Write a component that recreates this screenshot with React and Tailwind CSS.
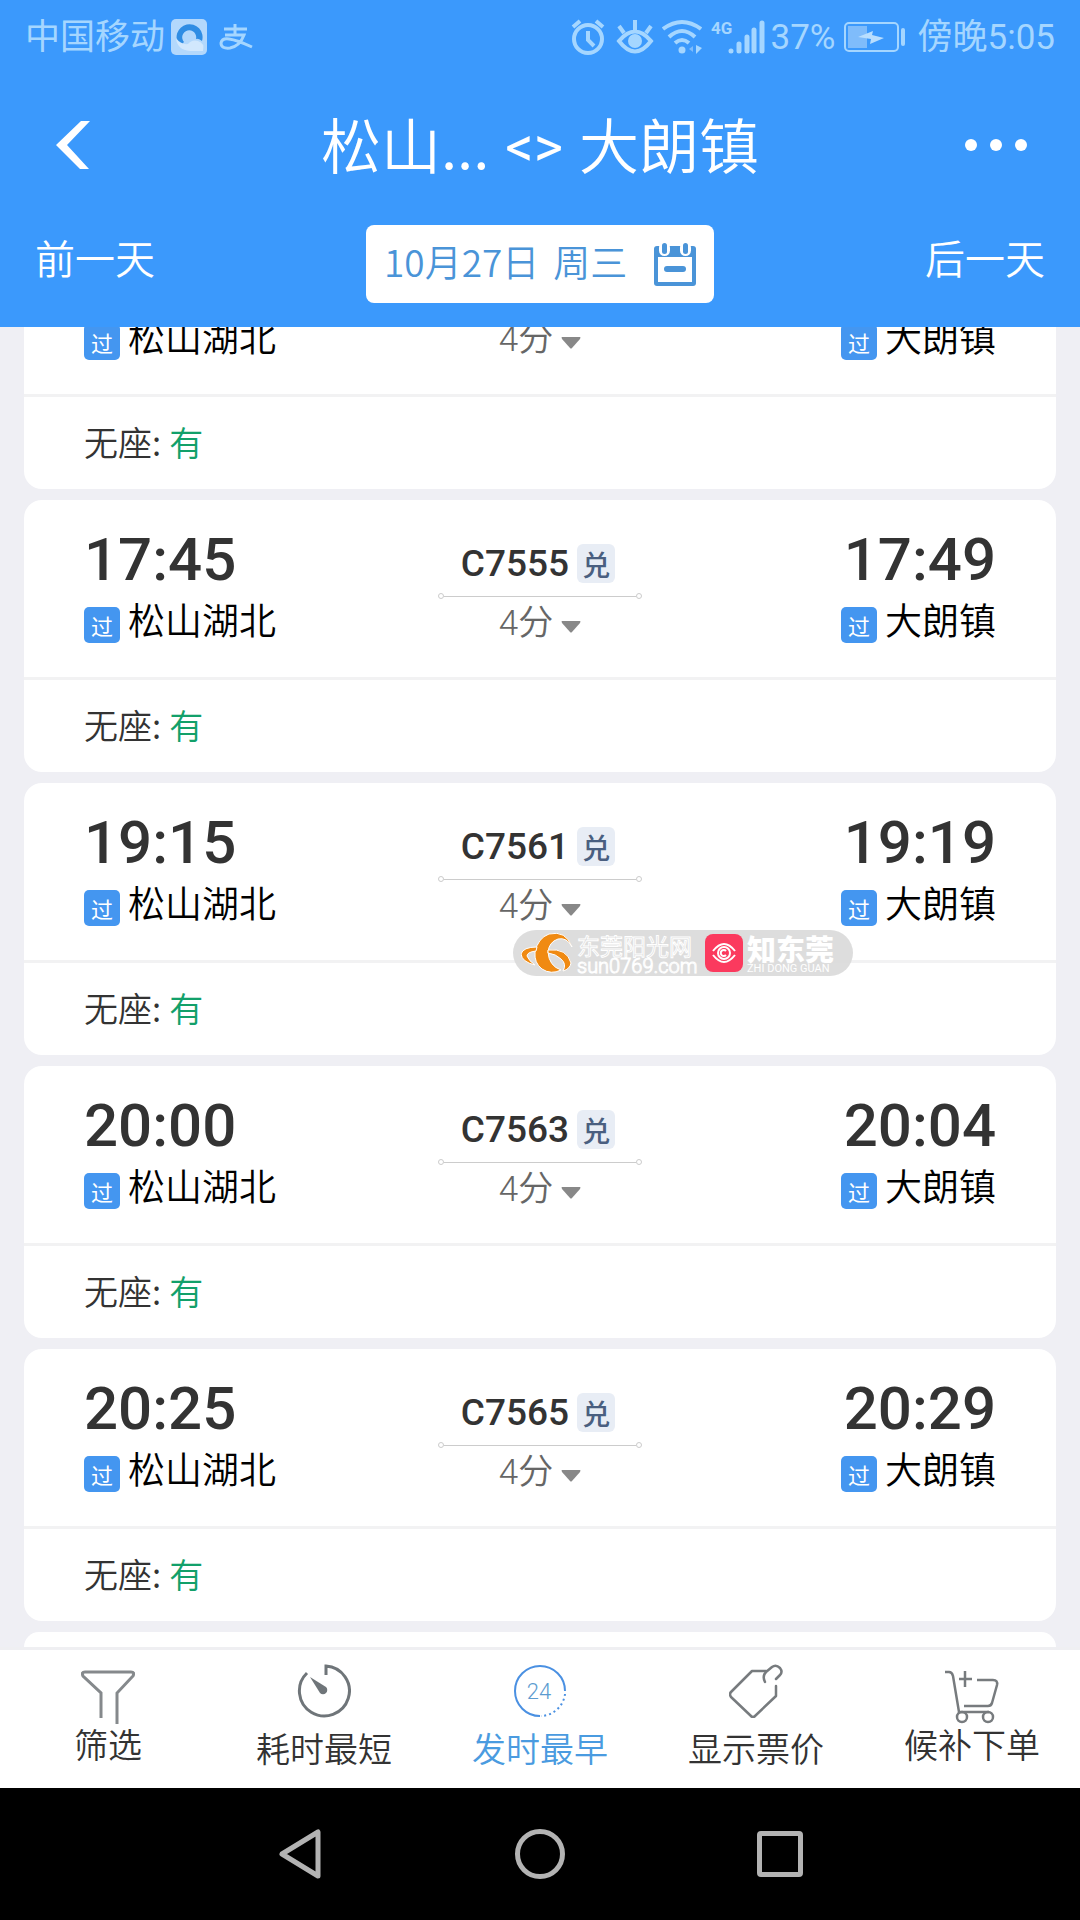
import React from 'react';

const trains = [
  { depart: '17:45', arrive: '17:49', code: 'C7555' },
  { depart: '19:15', arrive: '19:19', code: 'C7561' },
  { depart: '20:00', arrive: '20:04', code: 'C7563' },
  { depart: '20:25', arrive: '20:29', code: 'C7565' },
];

function StatusBar() {
  return (
    <div className="flex h-[72px] items-center justify-between px-[25px] pt-0.5 font-['Roboto','Noto_Sans_CJK_SC',sans-serif] text-[35px] leading-none text-[#a5d6ff]">
      <div className="flex items-center">
        <span>中国移动</span>
        <svg width="36" height="36" viewBox="0 0 36 36" className="ml-1.5">
          <rect width="36" height="36" rx="5" fill="#b3d8fc" />
          <path d="M9 27 A13 13 0 1 1 31 22 Q27 19 25 20 A7 7 0 1 0 13 23 Z" fill="#2f8de4" />
          <path d="M5 19 Q6 31 19 32 H32 Q34 24 27 22 Q21 20 17 25 Q10 26 5 19 Z" fill="#d2e8fd" />
        </svg>
        <svg width="34" height="27" viewBox="0 0 34 27" fill="none" stroke="#a5d6ff" strokeWidth="3" className="ml-3">
          <path d="M5 5 H28 M16 0 V11 M6 11 H25 Q21 22 11 24 Q2 25 2 19 Q3 14 10 15 Q18 16 33 23" />
        </svg>
      </div>
      <div className="flex items-center">
        <svg width="34" height="36" viewBox="0 0 34 36" fill="none" stroke="#a5d6ff" strokeWidth="4">
          <circle cx="17" cy="20" r="14" />
          <path d="M17 12 V21 L23 27 M2 8 L9 2 M32 8 L25 2" />
        </svg>
        <svg width="38" height="36" viewBox="0 0 38 36" fill="none" stroke="#a5d6ff" strokeWidth="4" className="ml-[11px]">
          <path d="M3 22 Q19 3 35 22 Q19 43 3 22 Z M19 11 V1 M8 14 L3 7 M30 14 L35 7" />
          <circle cx="19" cy="22" r="7" fill="#a5d6ff" stroke="none" />
        </svg>
        <svg width="40" height="36" viewBox="0 0 40 36" fill="none" stroke="#a5d6ff" strokeWidth="4" className="ml-2">
          <path d="M1 10 Q20 -4 39 10 M7 18 Q20 6 33 18 M13 24 Q20 18 27 24" />
          <circle cx="20" cy="31" r="3.5" fill="#a5d6ff" stroke="none" />
          <path d="M34 26 V35 L40 29 Z" fill="#a5d6ff" stroke="none" />
          <path d="M31 27 V33 L27 30 Z" fill="#7fbcfb" stroke="none" />
        </svg>
        <svg width="54" height="36" viewBox="0 0 54 36" className="ml-[9px]">
          <text x="0" y="15" fill="#a5d6ff" fontSize="17" fontWeight="700" fontFamily="Roboto, sans-serif">4G</text>
          <path d="M20 32 V32.1 M28 25 V32 M36 18 V32 M43 11 V32 M51 4 V32" stroke="#a5d6ff" strokeWidth="5" strokeLinecap="round" />
        </svg>
        <span className="ml-1.5">37%</span>
        <svg width="62" height="30" viewBox="0 0 62 30" className="ml-2">
          <rect x="1" y="1" width="53" height="28" rx="4" fill="none" stroke="#a5d6ff" strokeWidth="2" />
          <rect x="4" y="4" width="19" height="22" fill="#7fbcfb" />
          <path d="M14 15 L29 9 L28 13 L40 16 L26 22 L27 17 Z" fill="#b9defe" />
          <rect x="57" y="6" width="4" height="18" rx="2" fill="#a5d6ff" />
        </svg>
        <span className="ml-3">傍晚5:05</span>
      </div>
    </div>
  );
}

function Header() {
  return (
    <header className="relative z-10 h-[327px] bg-[#3b99fc] text-white">
      <StatusBar />
      <div className="flex h-[145px] items-center justify-between px-[53px]">
        <button aria-label="返回" className="w-[62px] pl-[3px]">
          <svg width="34" height="48" viewBox="0 0 34 48" fill="#fff">
            <path d="M25 0 H34 L11 24 L33 48 H24 L0 24 Z" />
          </svg>
        </button>
        <h1 className="flex items-center gap-4 pb-1 text-[60px] leading-none font-[350]">
          <span>松山...</span>
          <span className="pt-2 font-['Roboto',sans-serif] text-[56px] font-normal">&lt;&gt;</span>
          <span>大朗镇</span>
        </h1>
        <button aria-label="更多" className="flex w-[62px] justify-between">
          <span className="size-3 rounded-full bg-white" />
          <span className="size-3 rounded-full bg-white" />
          <span className="size-3 rounded-full bg-white" />
        </button>
      </div>
      <div className="flex items-center justify-between px-[35px] pt-2">
        <button className="pb-3.5 text-[40px] leading-none font-[350]">前一天</button>
        <button className="flex h-[78px] w-[348px] items-center justify-between rounded-lg bg-white px-[18px] text-[37px] leading-none font-[350] text-[#4a94d8]">
          <span className="flex gap-3.5 pb-1.5">
            <span>10月27日</span>
            <span>周三</span>
          </span>
          <CalendarIcon />
        </button>
        <button className="pb-3.5 text-[40px] leading-none font-[350]">后一天</button>
      </div>
    </header>
  );
}

function CalendarIcon() {
  return (
    <svg width="42" height="43" viewBox="0 0 42 43">
      <rect y="3" width="42" height="40" rx="3" fill="#4a94d8" />
      <rect x="4" y="14" width="34" height="25" fill="#fff" />
      <rect x="5" y="-1" width="11" height="14" rx="5.5" fill="#fff" />
      <rect x="26" y="-1" width="11" height="14" rx="5.5" fill="#fff" />
      <rect x="8" y="0" width="5" height="11" rx="2.5" fill="#4a94d8" />
      <rect x="29" y="0" width="5" height="11" rx="2.5" fill="#4a94d8" />
      <rect x="10" y="23" width="22" height="6" rx="3" fill="#4a94d8" />
    </svg>
  );
}

function Station({ name }) {
  return (
    <div className="flex items-start gap-2">
      <span className="mt-[9px] flex size-9 items-center justify-center rounded-[5px] bg-[#4496f0] text-[22px] leading-none text-white">过</span>
      <span className="text-[37px] leading-[42px] font-[350] text-black">{name}</span>
    </div>
  );
}

function Duration() {
  return (
    <button className="flex items-center gap-2 font-['Roboto','Noto_Sans_CJK_SC',sans-serif] text-[35px] leading-[42px] font-[350] text-[#666]">
      4分
      <svg width="20" height="12" viewBox="0 0 20 12" fill="#888" className="mt-1.5">
        <path d="M1 0 H19 Q20 0 19 2 L11 11 Q10 12 9 11 L1 2 Q0 0 1 0 Z" />
      </svg>
    </button>
  );
}

function Seats() {
  return (
    <div className="flex h-[95px] items-center gap-2 border-t-3 border-[#f2f2f3] px-[60px] pb-0.5 text-[34px] leading-none font-[350] text-[#333]">
      <span>无座:</span>
      <span className="text-[#12a06a]">有</span>
    </div>
  );
}

function TrainCard({ train }) {
  return (
    <article className="rounded-[18px] bg-white">
      <div className="grid h-[177px] grid-cols-[1fr_204px_1fr] px-[60px] pt-6">
        <div>
          <p className="mb-[3px] font-[Roboto] text-[60px] leading-[71px] font-medium text-[#333]">{train.depart}</p>
          <Station name="松山湖北" />
        </div>
        <div className="flex flex-col items-center pt-5">
          <div className="flex items-center gap-2 pr-1 text-[#333]">
            <span className="font-[Roboto] text-[37px] leading-[38px] font-medium">{train.code}</span>
            <span className="flex h-[39px] w-[38px] items-center justify-center rounded-md bg-[#e8edf5] text-[28px] leading-none font-medium text-[#4a5f80]">兑</span>
          </div>
          <div className="mt-2.5 mb-1 flex w-full items-center">
            <span className="size-[6px] rounded-full border border-[#ccc]" />
            <span className="h-px flex-1 bg-[#ccc]" />
            <span className="size-[6px] rounded-full border border-[#ccc]" />
          </div>
          <Duration />
        </div>
        <div className="flex flex-col items-end">
          <p className="mb-[3px] font-[Roboto] text-[60px] leading-[71px] font-medium text-[#333]">{train.arrive}</p>
          <Station name="大朗镇" />
        </div>
      </div>
      <Seats />
    </article>
  );
}

// Card that is already scrolled halfway under the header
function ScrolledCard() {
  return (
    <article className="rounded-b-[18px] bg-white">
      <div className="-mt-3 grid h-[79px] grid-cols-[1fr_204px_1fr] px-[60px]">
        <Station name="松山湖北" />
        <div className="flex items-start justify-center pt-1">
          <Duration />
        </div>
        <div className="flex justify-end">
          <Station name="大朗镇" />
        </div>
      </div>
      <Seats />
    </article>
  );
}

// Translucent source stamp that floats over the list
function Watermark() {
  return (
    <div className="absolute top-[603px] left-[513px] flex h-[46px] w-[340px] items-center rounded-full bg-[#d9d9d9]/90 pl-2">
      <svg width="52" height="40" viewBox="0 0 52 40" fill="#f08a12" stroke="#fff" strokeWidth="1">
        <path d="M51 14 Q46 4 37 6 Q28 9 27 19 Q28 33 40 37 Q30 42 21 36 Q13 30 14 19 Q17 5 28 1 Q45 -3 51 14 Z" />
        <path d="M15 18 Q6 19 6 23 Q8 28 14 32 Q1 29 0 21 Q2 14 16 14 Z" />
        <path d="M27 17 Q46 15 50 30 Q49 36 42 38 Q46 31 40 26 Q35 21 27 20 Z" />
      </svg>
      <div className="ml-1 flex w-[120px] flex-col text-[#d9d9d9] [-webkit-text-stroke:1px_#fff]">
        <span className="text-[23px] leading-[27px]">东莞阳光网</span>
        <span className="font-[Roboto] text-[20px] leading-[15px] font-light">sun0769.com</span>
      </div>
      <svg width="38" height="38" viewBox="0 0 38 38" fill="none" stroke="#fff" strokeWidth="2" className="ml-2">
        <rect width="38" height="38" rx="8" fill="#fb3a5e" stroke="none" />
        <path d="M8 17 Q19 3 30 17 M8 21 Q19 35 30 21" />
        <circle cx="19" cy="19" r="6" />
        <path d="M21 17 A3 3 0 1 0 21 21" />
      </svg>
      <div className="ml-1 flex flex-col text-white">
        <span className="text-[29px] leading-[32px] font-black">知东莞</span>
        <span className="font-[Roboto] text-[11px] leading-[10px]">ZHI DONG GUAN</span>
      </div>
    </div>
  );
}

function FunnelIcon() {
  return (
    <svg width="54" height="54" viewBox="0 0 54 54" fill="none" stroke="#85898c" strokeWidth="3">
      <path d="M20 48 V23 L2 6 Q0 2 4 2 H50 Q54 2 52 6 L36 23 V54" />
    </svg>
  );
}

function TimerIcon() {
  return (
    <svg width="54" height="54" viewBox="0 0 54 54" fill="none" stroke="#6f7579" strokeWidth="3">
      <path d="M29 11 V2 A25 25 0 1 1 10 9" />
      <path d="M13 13 L29 23 A4 4 0 1 1 23 29 Z" fill="#6f7579" stroke="none" />
    </svg>
  );
}

function Clock24Icon() {
  return (
    <svg width="54" height="54" viewBox="0 0 54 54" fill="none" stroke="#4a90e2" strokeWidth="2">
      <path d="M27 52 A25 25 0 1 1 52 27" />
      <path d="M52 30 A25 25 0 0 1 28 52" strokeDasharray="2 3" />
      <text x="26" y="35" textAnchor="middle" fontSize="22" fontWeight="300" fill="#5b9bd0" stroke="none" fontFamily="Roboto, sans-serif">24</text>
    </svg>
  );
}

function TagIcon() {
  return (
    <svg width="54" height="54" viewBox="0 0 54 54" fill="none" stroke="#777b7e" strokeWidth="2.5" strokeLinejoin="round" strokeLinecap="round">
      <path d="M37 7 H23 L2 28 Q0 30 2 33 L22 52 Q24 54 26 52 L47 32 V22" />
      <path d="M36 18 Q33 12 37 8 L43 3 Q47 0 51 4 Q54 8 51 11 L47 15" />
    </svg>
  );
}

function CartIcon() {
  return (
    <svg width="54" height="54" viewBox="0 0 54 54" fill="none" stroke="#777b7e" strokeWidth="2.5">
      <path d="M0 2 H4 Q7 2 8 6 L14 42 H44 M32 10 H48 Q53 10 52 15 L47 33 Q46 36 43 36 H19" />
      <path d="M20 1 V17 M14 9 H27" />
      <circle cx="17" cy="47" r="5" />
      <circle cx="43" cy="47" r="5" />
    </svg>
  );
}

const tabs = [
  { label: '筛选', Icon: FunnelIcon, className: 'pt-5 text-[#333]', labelClass: 'mt-0.5' },
  { label: '耗时最短', Icon: TimerIcon, className: 'pt-3.5 text-[#333]', labelClass: 'mt-3' },
  { label: '发时最早', Icon: Clock24Icon, className: 'pt-3.5 text-[#4a9be0]', labelClass: 'mt-3' },
  { label: '显示票价', Icon: TagIcon, className: 'pt-3.5 text-[#333]', labelClass: 'mt-3' },
  { label: '候补下单', Icon: CartIcon, className: 'pt-5 text-[#333]', labelClass: 'mt-0.5' },
];

function TabBar() {
  return (
    <nav className="relative z-10 grid h-[141px] grid-cols-5 border-t-3 border-[#efeff2] bg-white">
      {tabs.map(({ label, Icon, className, labelClass }) => (
        <button key={label} className={`flex flex-col items-center text-[34px] leading-[36px] font-[350] ${className}`}>
          <Icon />
          <span className={labelClass}>{label}</span>
        </button>
      ))}
    </nav>
  );
}

function SystemNav() {
  return (
    <div className="h-[132px] bg-black">
      <div className="mx-auto grid h-full w-2/3 grid-cols-3 place-items-center">
        <button aria-label="后退">
          <svg width="44" height="52" viewBox="0 0 44 52" fill="none" stroke="#b3b3b3" strokeWidth="5" strokeLinejoin="round">
            <path d="M40 4 V48 L4 26 Z" />
          </svg>
        </button>
        <button aria-label="主屏幕" className="size-[50px] rounded-full border-5 border-[#b3b3b3]" />
        <button aria-label="最近任务" className="size-[46px] rounded border-5 border-[#b3b3b3]" />
      </div>
    </div>
  );
}

export default function App() {
  return (
    <div className="flex h-screen flex-col bg-[#efeff4] font-['Noto_Sans_CJK_SC',sans-serif]">
      <Header />
      <main className="relative flex flex-1 flex-col gap-[11px] overflow-hidden px-6">
        <ScrolledCard />
        {trains.map((train) => (
          <TrainCard key={train.code} train={train} />
        ))}
        <div className="flex-1 rounded-t-[18px] bg-white" />
        <Watermark />
      </main>
      <TabBar />
      <SystemNav />
    </div>
  );
}
